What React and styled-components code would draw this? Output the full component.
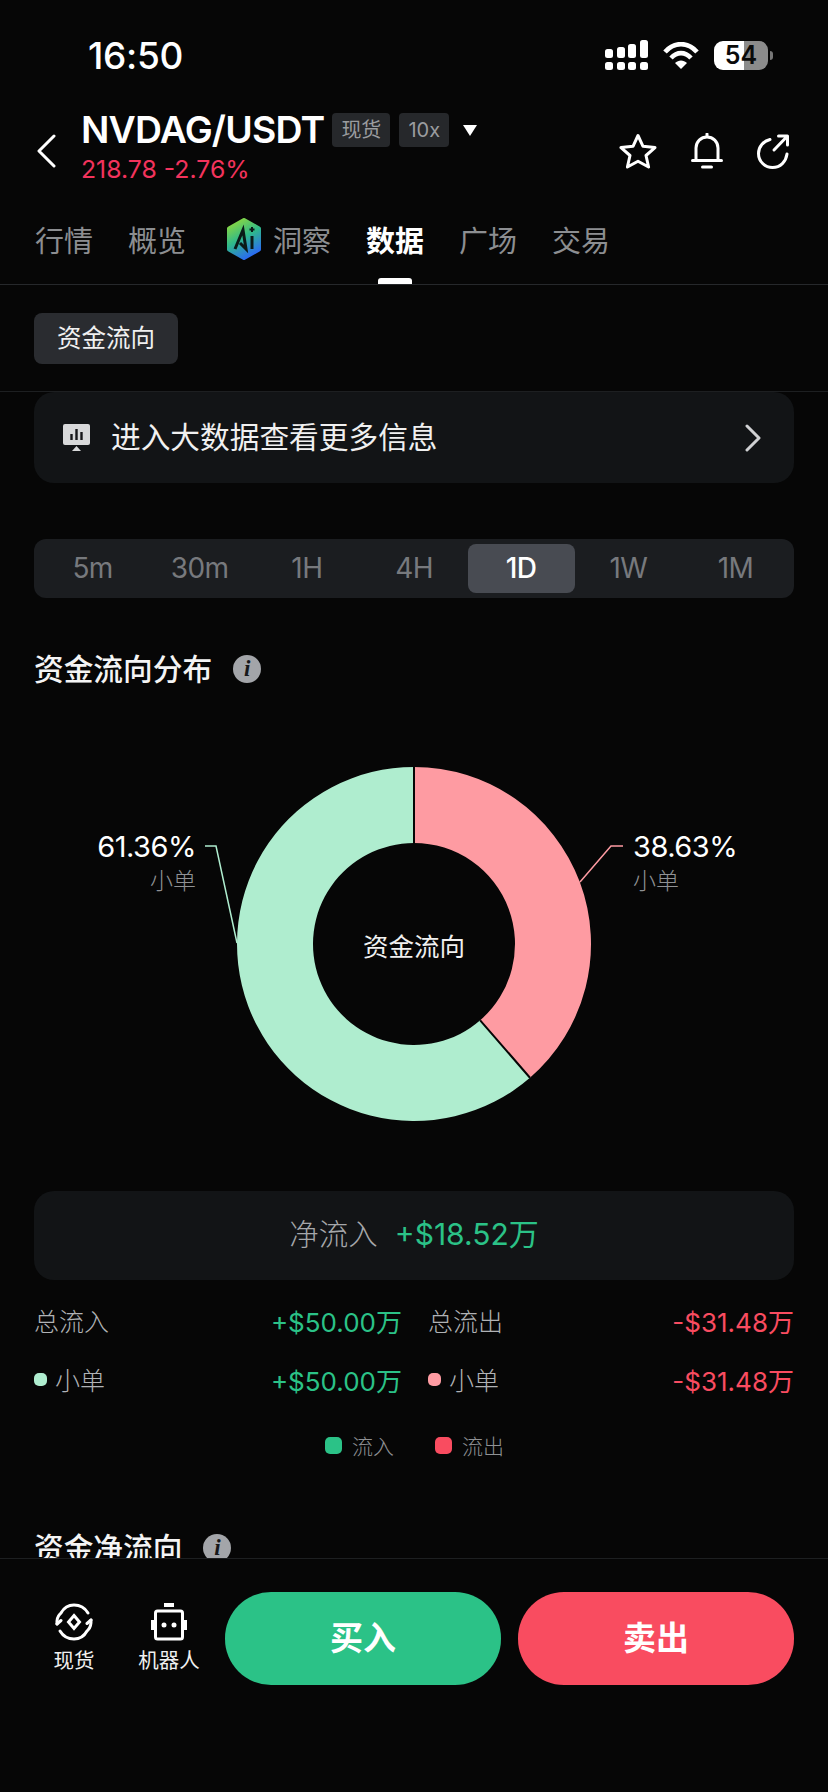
import React from "react";
import styled, { createGlobalStyle } from "styled-components";

const Global = createGlobalStyle`
  html, body { margin: 0; padding: 0; background: #060606; }
  * { box-sizing: border-box; }
`;

const SANS = `"Inter", "Noto Sans CJK SC", sans-serif`;
const GREEN = "#2bc287";
const RED = "#f94c60";

const Page = styled.div`
  width: 828px;
  height: 1792px;
  background: #060606;
  color: #fff;
  font-family: ${SANS};
  display: flex;
  flex-direction: column;
  overflow: hidden;
`;

const StatusBar = styled.div`
  height: 110px;
  padding: 0 60px 0 88px;
  display: flex;
  justify-content: space-between;
  align-items: center;
  flex: none;
`;

const Time = styled.div`
  font-size: 37px;
  font-weight: 500;
  letter-spacing: -0.3px;
  margin-top: 1px;
`;

const StatusIcons = styled.div`
  display: flex;
  align-items: center;
  gap: 15px;
`;

const BatteryBody = styled.div`
  width: 54px;
  height: 29px;
  border-radius: 9px;
  background: linear-gradient(90deg, #fff 0 55%, #8b8b8b 55% 100%);
  color: #0a0a0a;
  font-size: 25px;
  font-weight: 600;
  line-height: 29px;
  text-align: center;
  position: relative;
  &::after {
    content: "";
    position: absolute;
    right: -5px;
    top: 10px;
    width: 3px;
    height: 9px;
    border-radius: 0 3px 3px 0;
    background: #777;
  }
`;

const Header = styled.div`
  height: 80px;
  padding: 0 38px 0 37px;
  display: flex;
  align-items: center;
  flex: none;
`;

const BackIcon = styled.svg`
  width: 20px;
  height: 34px;
  margin-top: 2px;
  flex: none;
`;

const TitleBlock = styled.div`
  margin: 0 0 4px 24px;
  flex: 1;
`;

const TitleRow = styled.div`
  display: flex;
  align-items: center;
  height: 36px;
`;

const Pair = styled.div`
  font-size: 37.4px;
  font-weight: 600;
  letter-spacing: -0.8px;
  line-height: 36px;
`;

const Chip = styled.span`
  height: 34px;
  padding: 0 ${(p) => p.$pad}px;
  margin-left: ${(p) => p.$gap}px;
  border-radius: 4px;
  background: #26282b;
  color: #9a9c9f;
  font-size: 20px;
  line-height: 34px;
`;

const Caret = styled.span`
  margin: 2px 0 0 14px;
  width: 0;
  height: 0;
  border-left: 7px solid transparent;
  border-right: 7px solid transparent;
  border-top: 11px solid #fff;
`;

const Price = styled.div`
  margin-top: 5px;
  font-size: 24.8px;
  line-height: 32px;
  color: #f2335c;
`;

const HeadIcons = styled.div`
  display: flex;
  gap: 33px;
  margin-top: 2px;
`;

const Tabs = styled.div`
  height: 95px;
  padding: 0 0 0 35px;
  border-bottom: 1px solid #26282b;
  display: flex;
  gap: 35px;
  position: relative;
  flex: none;
`;

const Tab = styled.div`
  position: relative;
  display: flex;
  align-items: center;
  height: 94px;
  padding-top: 3px;
  font-size: 29px;
  font-weight: ${(p) => (p.$active ? 600 : 400)};
  color: ${(p) => (p.$active ? "#fff" : "#8c8e91")};
  ${(p) =>
    p.$active &&
    `&::after {
      content: "";
      position: absolute;
      left: 12px;
      bottom: 0;
      width: 34px;
      height: 6px;
      border-radius: 3px 3px 0 0;
      background: #fff;
    }`}
`;

const AiLogo = styled.svg`
  width: 36px;
  height: 42px;
  margin: 0 11px 0 5px;
`;

const SubBar = styled.div`
  height: 107px;
  padding: 28px 34px 0;
  border-bottom: 1px solid #1d1f21;
  flex: none;
`;

const SubChip = styled.div`
  width: 144px;
  height: 51px;
  border-radius: 8px;
  background: #2a2c30;
  font-size: 24.5px;
  line-height: 51px;
  text-align: center;
  color: #f0f0f0;
`;

const Scroll = styled.div`
  flex: 1;
  min-height: 0;
  overflow: hidden;
  padding: 0 34px;
`;

const LinkCard = styled.div`
  height: 91px;
  border-radius: 20px;
  background: #121416;
  padding: 0 33px 0 29px;
  display: flex;
  align-items: center;
`;

const LinkText = styled.div`
  flex: 1;
  margin: 0 0 4px 21px;
  font-size: 29.7px;
  color: #f0f0f0;
`;

const Segments = styled.div`
  margin-top: 56px;
  height: 59px;
  padding: 5px;
  border-radius: 12px;
  background: #1b1d20;
  display: grid;
  grid-template-columns: repeat(7, 1fr);
`;

const Segment = styled.div`
  border-radius: 8px;
  background: ${(p) => (p.$active ? "#484b52" : "transparent")};
  color: ${(p) => (p.$active ? "#fff" : "#77797d")};
  font-size: 28px;
  line-height: 49px;
  text-align: center;
  font-weight: ${(p) => (p.$active ? 500 : 400)};
  letter-spacing: -0.6px;
`;

const SectionTitle = styled.div`
  margin-top: ${(p) => p.$top}px;
  display: flex;
  align-items: center;
  gap: 21px;
  height: 40px;
  font-size: 29.7px;
  font-weight: 500;
  color: #f4f4f4;
`;

const SectionLabel = styled.span`
  margin-bottom: 4px;
`;

const Info = styled.span`
  width: 28px;
  height: 28px;
  border-radius: 50%;
  background: #a3a5a9;
  color: #17181a;
  font-family: "Liberation Serif", serif;
  font-style: italic;
  font-weight: 700;
  font-size: 23px;
  line-height: 28px;
  text-align: center;
`;

const Chart = styled.div`
  position: relative;
  height: 392px;
  margin-top: 78px;
`;

const ChartSvg = styled.svg`
  position: absolute;
  left: -34px;
  top: 0;
  width: 828px;
  height: 392px;
`;

const Slice = styled.div`
  position: absolute;
  top: 63px;
  ${(p) => (p.$right ? `left: ${p.$right}px;` : `right: ${p.$left}px; text-align: right;`)}
`;

const SlicePct = styled.div`
  font-size: 29px;
  line-height: 34px;
  color: #fff;
  letter-spacing: -0.5px;
`;

const SliceName = styled.div`
  font-size: 23px;
  line-height: 34px;
  font-weight: 300;
  color: #8f9194;
`;

const ChartCenter = styled.div`
  position: absolute;
  left: 280px;
  width: 200px;
  top: 162px;
  text-align: center;
  font-size: 25.500px;
  line-height: 36px;
  color: #f0f0f0;
`;

const NetCard = styled.div`
  margin-top: 32px;
  height: 89px;
  padding-bottom: 8px;
  border-radius: 20px;
  background: #121416;
  display: flex;
  justify-content: center;
  align-items: center;
  gap: 17px;
  font-size: 29.5px;
`;

const NetLabel = styled.span`
  font-weight: 300;
  color: #a5a7aa;
`;

const Amount = styled.span`
  color: ${(p) => p.$color};
  font-size: ${(p) => p.$size || 26}px;
`;

const Stats = styled.div`
  margin-top: 22px;
  display: grid;
  grid-template-columns: 368px 366px;
  column-gap: 26px;
  row-gap: 23px;
`;

const Stat = styled.div`
  height: 36px;
  display: flex;
  align-items: center;
  justify-content: space-between;
`;

const StatLabel = styled.div`
  display: flex;
  align-items: center;
  gap: 8px;
  font-size: 25px;
  font-weight: 300;
  color: #b0b2b5;
`;

const Dot = styled.span`
  width: 13px;
  height: 13px;
  border-radius: 5px;
  background: ${(p) => p.$color};
`;

const Legend = styled.div`
  margin-top: 33px;
  display: flex;
  justify-content: center;
  gap: 41px;
  padding-left: 1px;
`;

const LegendItem = styled.div`
  display: flex;
  align-items: center;
  gap: 10px;
  font-size: 21px;
  font-weight: 300;
  color: #8f9194;
`;

const LegendBox = styled.span`
  width: 17px;
  height: 17px;
  border-radius: 5px;
  background: ${(p) => p.$color};
`;

const Footer = styled.div`
  height: 234px;
  flex: none;
  border-top: 1px solid #1d1f21;
  padding: 33px 34px 0 42px;
  display: flex;
  align-items: flex-start;
`;

const FootItem = styled.div`
  width: 64px;
  margin: 11px ${(p) => p.$after}px 0 0;
  display: flex;
  flex-direction: column;
  align-items: center;
  font-size: 20.5px;
  white-space: nowrap;
  color: #f0f0f0;
`;

const FootLabel = styled.span`
  margin-top: 5px;
  line-height: 30px;
`;

const TradeButton = styled.div`
  width: 276px;
  height: 93px;
  margin-left: ${(p) => p.$gap}px;
  border-radius: 46px;
  background: ${(p) => p.$color};
  font-size: 33px;
  font-weight: 700;
  line-height: 93px;
  text-align: center;
  color: #fff;
`;

const periods = ["5m", "30m", "1H", "4H", "1D", "1W", "1M"];

// outer radius 177, inner 101, pink runs clockwise from the top for 38.63%
const cx = 414;
const cy = 177;
const arcEnd = (r) => {
  const a = 0.3863 * 2 * Math.PI;
  return [cx + r * Math.sin(a), cy - r * Math.cos(a)];
};

const Donut = () => {
  const [ox, oy] = arcEnd(177);
  const [ix, iy] = arcEnd(101);
  return (
    <ChartSvg viewBox="0 0 828 392">
      <path
        d={`M${cx} 0A177 177 0 0 1 ${ox} ${oy}L${ix} ${iy}A101 101 0 0 0 ${cx} 76Z`}
        fill="#fe9ba2"
      />
      <path
        d={`M${ox} ${oy}A177 177 0 1 1 ${cx} 0L${cx} 76A101 101 0 1 0 ${ix} ${iy}Z`}
        fill="#afedcf"
      />
      <path d={`M${cx} 0V76M${ox} ${oy}L${ix} ${iy}`} stroke="#060606" strokeWidth="2" />
      <path d="M205 79H216L237 176" fill="none" stroke="#afedcf" strokeWidth="1.5" />
      <path d="M623 79H611L580 115" fill="none" stroke="#fe9ba2" strokeWidth="1.5" />
    </ChartSvg>
  );
};

const Signal = () => (
  <svg width="43" height="31" viewBox="0 0 43 31" fill="#fff">
    <rect x="0" y="9" width="8" height="9" rx="2.5" />
    <rect x="12" y="7" width="8" height="11" rx="2.5" />
    <rect x="23" y="4" width="8" height="14" rx="2.5" />
    <rect x="35" y="0" width="8" height="18" rx="2.5" />
    <rect x="0" y="22" width="8" height="8" rx="2.5" />
    <rect x="12" y="22" width="8" height="8" rx="2.5" />
    <rect x="23" y="22" width="8" height="8" rx="2.5" />
    <rect x="35" y="22" width="8" height="8" rx="2.5" />
  </svg>
);

const Wifi = () => (
  <svg width="36" height="27" viewBox="0 0 36 27" fill="none" stroke="#fff" strokeWidth="4.6">
    <path d="M2 10C11-.5 25-.5 34 10" />
    <path d="M8 16C14 9.5 22 9.5 28 16" />
    <path d="M12 21L18 27L24 21C20.5 17.5 15.5 17.5 12 21Z" fill="#fff" stroke="none" />
  </svg>
);

const Star = () => (
  <svg width="40" height="36" viewBox="0 0 40 36" fill="none" stroke="#fff" strokeWidth="3" strokeLinejoin="round">
    <path d="M20 2.500L25 13.300L37 14.600L28 22.500L30.600 34L20 28.200L9.400 34L12 22.500L3 14.600L15 13.300Z" />
  </svg>
);

const Bell = () => (
  <svg width="32" height="36" viewBox="0 0 32 36" fill="none" stroke="#fff" strokeWidth="3" strokeLinecap="round">
    <path d="M5 27V15C5 8.500 10 4 16 4C22 4 27 8.500 27 15V27" />
    <path d="M1.500 27.500H30.500" />
    <path d="M16 1V3M11.500 34H20.500" />
  </svg>
);

const Share = () => (
  <svg width="34" height="36" viewBox="0 0 34 36" fill="none" stroke="#fff" strokeWidth="3" strokeLinecap="round" strokeLinejoin="round">
    <path d="M14 6.500C7.500 8 2.500 13.500 2.500 20.500C2.500 28.500 9 34.500 16.500 34.500C24.500 34.500 30 28.500 31 21" />
    <path d="M18 17L31 3.500M22.500 3H31.500V12" />
  </svg>
);

const Spot = () => (
  <svg width="38" height="38" viewBox="0 0 38 38" fill="none" stroke="#fff" strokeWidth="3" strokeLinecap="round">
    <path d="M6 10C9 4.500 14 2 19 2C25 2 30 5 33 10" />
    <path d="M32 28C29 33.500 24 36 19 36C13 36 8 33 5 28" />
    <path d="M2 21C1.700 16.500 3 13 5 11" />
    <path d="M36 17C36.300 21.500 35 25 33 27" />
    <path d="M2 21L6 17.500M36 17L32 20.500" />
    <path d="M19 12.500L24.500 19L19 25.500L13.500 19Z" />
  </svg>
);

const Robot = () => (
  <svg width="36" height="38" viewBox="0 0 36 38" fill="none" stroke="#fff" strokeWidth="3">
    <rect x="4.500" y="8" width="27" height="28" rx="2" />
    <path d="M13 2H23" strokeWidth="4" />
    <path d="M1.500 17V27M34.500 17V27" strokeWidth="3" />
    <circle cx="13" cy="22" r="2.500" fill="#fff" stroke="none" />
    <circle cx="23" cy="22" r="2.500" fill="#fff" stroke="none" />
  </svg>
);

export default function App() {
  return (
    <Page>
      <Global />
      <StatusBar>
        <Time>16:50</Time>
        <StatusIcons>
          <Signal />
          <Wifi />
          <BatteryBody>54</BatteryBody>
        </StatusIcons>
      </StatusBar>

      <Header>
        <BackIcon viewBox="0 0 20 34" fill="none" stroke="#fff" strokeWidth="3" strokeLinecap="round" strokeLinejoin="round">
          <path d="M17 2L2 17L17 32" />
        </BackIcon>
        <TitleBlock>
          <TitleRow>
            <Pair>NVDAG/USDT</Pair>
            <Chip $pad={9} $gap={8}>现货</Chip>
            <Chip $pad={9} $gap={9}>10x</Chip>
            <Caret />
          </TitleRow>
          <Price>218.78 -2.76%</Price>
        </TitleBlock>
        <HeadIcons>
          <Star />
          <Bell />
          <Share />
        </HeadIcons>
      </Header>

      <Tabs>
        <Tab>行情</Tab>
        <Tab>概览</Tab>
        <Tab>
          <AiLogo viewBox="0 0 36 42">
            <defs>
              <linearGradient id="aiGrad" x1="0.15" y1="0" x2="0.6" y2="1">
                <stop offset="0" stopColor="#8fd93c" />
                <stop offset="0.5" stopColor="#2fb98a" />
                <stop offset="1" stopColor="#2a6cf0" />
              </linearGradient>
            </defs>
            <path d="M18 2L33 10.500V31.500L18 40L3 31.500V10.500Z" fill="url(#aiGrad)" stroke="url(#aiGrad)" strokeWidth="4" strokeLinejoin="round" />
            <path d="M9 31L17 12L20 31L14 25" fill="none" stroke="#0a1a18" strokeWidth="3" />
            <path d="M26 18V31" stroke="#0a1a18" strokeWidth="3" />
            <path d="M26 9V14M23.500 11.500H28.500" stroke="#0a1a18" strokeWidth="2" />
          </AiLogo>
          洞察
        </Tab>
        <Tab $active>数据</Tab>
        <Tab>广场</Tab>
        <Tab>交易</Tab>
      </Tabs>

      <SubBar>
        <SubChip>资金流向</SubChip>
      </SubBar>

      <Scroll>
        <LinkCard>
          <svg width="27" height="27" viewBox="0 0 27 27">
            <path d="M2 0H25A2 2 0 0 1 27 2V19A2 2 0 0 1 25 21H2A2 2 0 0 1 0 19V2A2 2 0 0 1 2 0Z" fill="#d8d9da" />
            <path d="M8.500 10V16M13.500 5V16M18.500 8V16" stroke="#17181a" strokeWidth="2.400" />
            <path d="M13.500 22L18 27H9Z" fill="#d8d9da" />
          </svg>
          <LinkText>进入大数据查看更多信息</LinkText>
          <svg width="16" height="28" viewBox="0 0 16 28" fill="none" stroke="#d0d1d3" strokeWidth="3" strokeLinecap="round" strokeLinejoin="round">
            <path d="M2 2L14 14L2 26" />
          </svg>
        </LinkCard>

        <Segments>
          {periods.map((p) => (
            <Segment key={p} $active={p === "1D"}>{p}</Segment>
          ))}
        </Segments>

        <SectionTitle $top={51}>
          <SectionLabel>资金流向分布</SectionLabel>
          <Info>i</Info>
        </SectionTitle>

        <Chart>
          <Donut />
          <Slice $left={598}>
            <SlicePct>61.36%</SlicePct>
            <SliceName>小单</SliceName>
          </Slice>
          <Slice $right={599}>
            <SlicePct>38.63%</SlicePct>
            <SliceName>小单</SliceName>
          </Slice>
          <ChartCenter>资金流向</ChartCenter>
        </Chart>

        <NetCard>
          <NetLabel>净流入</NetLabel>
          <Amount $color={GREEN} $size={30}>+$18.52万</Amount>
        </NetCard>

        <Stats>
          <Stat>
            <StatLabel>总流入</StatLabel>
            <Amount $color={GREEN}>+$50.00万</Amount>
          </Stat>
          <Stat>
            <StatLabel>总流出</StatLabel>
            <Amount $color={RED}>-$31.48万</Amount>
          </Stat>
          <Stat>
            <StatLabel><Dot $color="#afedcf" />小单</StatLabel>
            <Amount $color={GREEN}>+$50.00万</Amount>
          </Stat>
          <Stat>
            <StatLabel><Dot $color="#fe9ba2" />小单</StatLabel>
            <Amount $color={RED}>-$31.48万</Amount>
          </Stat>
        </Stats>

        <Legend>
          <LegendItem><LegendBox $color={GREEN} />流入</LegendItem>
          <LegendItem><LegendBox $color={RED} />流出</LegendItem>
        </Legend>

        <SectionTitle $top={68}>
          <SectionLabel>资金净流向</SectionLabel>
          <Info>i</Info>
        </SectionTitle>
      </Scroll>

      <Footer>
        <FootItem $after={31}>
          <Spot />
          <FootLabel>现货</FootLabel>
        </FootItem>
        <FootItem $after={0}>
          <Robot />
          <FootLabel>机器人</FootLabel>
        </FootItem>
        <TradeButton $color={GREEN} $gap={24}>买入</TradeButton>
        <TradeButton $color={RED} $gap={17}>卖出</TradeButton>
      </Footer>
    </Page>
  );
}
